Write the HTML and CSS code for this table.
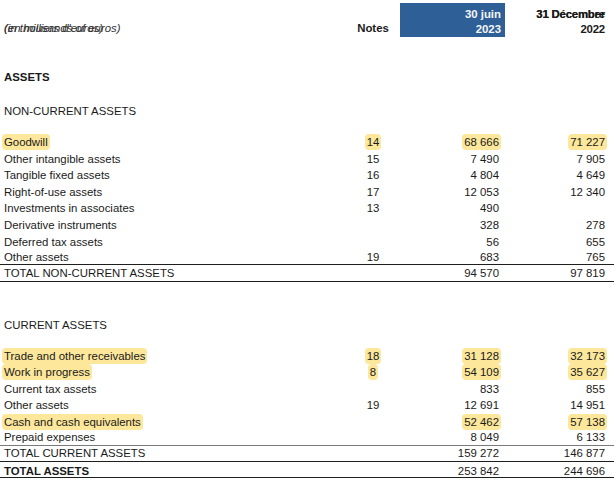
FILE: index.html
```html
<!DOCTYPE html>
<html>
<head>
<meta charset="utf-8">
<link rel="stylesheet" href="styles.css">
</head>
<body>
<div class="sheet">
  <div class="row head">
    <div class="label unit">
      <span class="stack">
        <span class="txt">(in thousands of euros)</span>
        <span class="txt over">(en milliers d'euros)</span>
      </span>
    </div>
    <div class="notes hnotes">Notes</div>
    <div class="c1 hblue"><span>30 juin</span><span>2023</span></div>
    <div class="c2 hplain">
      <span class="stack right">
        <span class="txt">31 December</span>
        <span class="txt over">31 Décembre</span>
      </span>
      <span>2022</span>
    </div>
  </div>

  <div class="row title assets"><div class="label bold">ASSETS</div></div>
  <div class="row title nca"><div class="label">NON-CURRENT ASSETS</div></div>

  <div class="row first h17"><div class="label"><span class="hl">Goodwill</span></div><div class="notes"><span class="hl">14</span></div><div class="c1"><span class="hl">68 666</span></div><div class="c2"><span class="hl">71 227</span></div></div>
  <div class="row h16"><div class="label">Other intangible assets</div><div class="notes">15</div><div class="c1">7 490</div><div class="c2">7 905</div></div>
  <div class="row h17"><div class="label">Tangible fixed assets</div><div class="notes">16</div><div class="c1">4 804</div><div class="c2">4 649</div></div>
  <div class="row h16"><div class="label">Right-of-use assets</div><div class="notes">17</div><div class="c1">12 053</div><div class="c2">12 340</div></div>
  <div class="row h17"><div class="label">Investments in associates</div><div class="notes">13</div><div class="c1">490</div><div class="c2"></div></div>
  <div class="row h17"><div class="label">Derivative instruments</div><div class="notes"></div><div class="c1">328</div><div class="c2">278</div></div>
  <div class="row h16"><div class="label">Deferred tax assets</div><div class="notes"></div><div class="c1">56</div><div class="c2">655</div></div>
  <div class="row h14 rule"><div class="label">Other assets</div><div class="notes">19</div><div class="c1">683</div><div class="c2">765</div></div>
  <div class="row h16 rule"><div class="label">TOTAL NON-CURRENT ASSETS</div><div class="notes"></div><div class="c1">94 570</div><div class="c2">97 819</div></div>

  <div class="row title ca"><div class="label">CURRENT ASSETS</div></div>

  <div class="row first h16"><div class="label"><span class="hl">Trade and other receivables</span></div><div class="notes"><span class="hl">18</span></div><div class="c1"><span class="hl">31 128</span></div><div class="c2"><span class="hl">32 173</span></div></div>
  <div class="row h17"><div class="label"><span class="hl">Work in progress</span></div><div class="notes"><span class="hl">8</span></div><div class="c1"><span class="hl">54 109</span></div><div class="c2"><span class="hl">35 627</span></div></div>
  <div class="row h16"><div class="label">Current tax assets</div><div class="notes"></div><div class="c1">833</div><div class="c2">855</div></div>
  <div class="row h17"><div class="label">Other assets</div><div class="notes">19</div><div class="c1">12 691</div><div class="c2">14 951</div></div>
  <div class="row h16"><div class="label"><span class="hl">Cash and cash equivalents</span></div><div class="notes"></div><div class="c1"><span class="hl">52 462</span></div><div class="c2"><span class="hl">57 138</span></div></div>
  <div class="row h15 rule grey"><div class="label">Prepaid expenses</div><div class="notes"></div><div class="c1">8 049</div><div class="c2">6 133</div></div>
  <div class="row h15 rule"><div class="label">TOTAL CURRENT ASSETS</div><div class="notes"></div><div class="c1">159 272</div><div class="c2">146 877</div></div>
  <div class="row h15 rule low"><div class="label bold">TOTAL ASSETS</div><div class="notes"></div><div class="c1">253 842</div><div class="c2">244 696</div></div>
</div>
</body>
</html>
```

FILE: styles.css
```css
html, body {
  margin: 0;
  padding: 0;
  background: #ffffff;
}

body {
  font-family: "Liberation Sans", Arial, sans-serif;
  font-size: 11.4px;
  color: #1a1a1a;
  width: 616px;
  height: 486px;
  overflow: hidden;
}

.sheet {
  width: 614px;
  display: flex;
  flex-direction: column;
}

.row {
  display: grid;
  grid-template-columns: 340px 60px 105px 109px;
  align-items: center;
  line-height: 13px;
  white-space: nowrap;
}

.label {
  padding-left: 4px;
}

.notes {
  text-align: center;
  padding-left: 6px;
}

.c1 {
  text-align: right;
  padding-right: 6px;
}

.c2 {
  text-align: right;
  padding-right: 9px;
}

.bold {
  font-weight: bold;
}

/* header */
.head {
  margin-top: 3px;
  height: 34px;
  align-items: stretch;
}

.head .label,
.head .notes {
  align-self: end;
  line-height: 15px;
  padding-bottom: 1px;
}

.unit {
  font-style: italic;
  color: #333;
}

.hnotes {
  font-weight: bold;
}

.stack {
  display: inline-grid;
}

.stack .txt {
  grid-area: 1 / 1;
}

.stack.right {
  justify-items: end;
}

.hblue {
  background: #2f5f97;
  color: #f4f6fa;
  font-weight: bold;
  display: flex;
  flex-direction: column;
  align-items: flex-end;
  padding-top: 4px;
  padding-right: 4px;
  line-height: 15px;
}

.hplain {
  font-weight: bold;
  display: flex;
  flex-direction: column;
  align-items: flex-end;
  padding-top: 4px;
  line-height: 15px;
  letter-spacing: -0.2px;
}

/* titles */
.title {
  height: 16px;
}

.assets {
  margin-top: 32px;
}

.nca {
  margin-top: 18px;
}

.ca {
  margin-top: 35px;
}

.first {
  margin-top: 15px;
}

.h14 { height: 14px; }
.h15 { height: 15px; }
.h16 { height: 16px; }
.h17 { height: 17px; }

.rule {
  border-bottom: 1px solid #1e1e1e;
}

.rule.grey {
  border-bottom-color: #7a7a7a;
}

.low {
  padding-top: 3px;
  height: 12px;
}

.hl {
  background: #fce79a;
  border-radius: 4px;
  padding: 2px 2px;
  margin: 0 -2px;
}
```
